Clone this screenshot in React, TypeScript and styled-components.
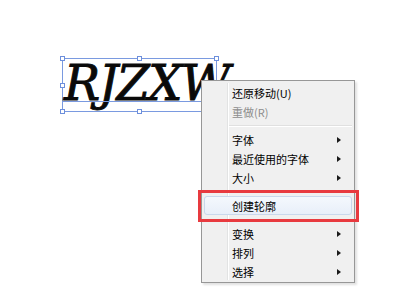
import React from "react";
import styled, { createGlobalStyle } from "styled-components";

const Global = createGlobalStyle`
  html, body { margin: 0; padding: 0; background: #fff; }
  body { width: 400px; height: 299px; overflow: hidden; }
`;

const Canvas = styled.div`
  position: relative;
  width: 400px;
  height: 299px;
  box-sizing: border-box;
  padding: 58px 0 0 62px;
  background: #fff;
  font-family: "Noto Sans CJK SC", "Noto Sans", sans-serif;
`;

const Selection = styled.div`
  position: relative;
  width: 155px;
  height: 54px;
  border: 1px solid #7a9ae0;
  box-sizing: border-box;
  padding-left: 1px;
`;

const Baseline = styled.div`
  position: absolute;
  left: 0;
  right: 0;
  top: 42px;
  height: 1px;
  background: #7a9ae0;
`;

const Word = styled.div`
  margin-top: 0;
  font-family: "DejaVu Serif", "Liberation Serif", serif;
  font-style: italic;
  font-size: 48px;
  line-height: 48px;
  color: #0a0a0a;
  white-space: nowrap;
  letter-spacing: -1.5px;
  -webkit-text-stroke: 0.9px #0a0a0a;
`;

const HandleGrid = styled.div`
  position: absolute;
  inset: -3px;
  display: grid;
  grid-template-columns: repeat(3, 5px);
  grid-template-rows: repeat(3, 5px);
  justify-content: space-between;
  align-content: space-between;
`;

const Handle = styled.div<{ $empty?: boolean }>`
  width: 5px;
  height: 5px;
  box-sizing: border-box;
  background: ${(p) => (p.$empty ? "transparent" : "#fff")};
  border: 1px solid ${(p) => (p.$empty ? "transparent" : "#6d8fdc")};
`;

const Menu = styled.div`
  position: absolute;
  left: 201px;
  top: 80px;
  width: 154px;
  height: 203px;
  box-sizing: border-box;
  border: 1px solid #979797;
  background: #f0f0f0;
  padding: 2px 0 1px;
  box-shadow: 2px 2px 2px rgba(0, 0, 0, 0.12);
  display: flex;
  flex-direction: column;
  &::before {
    content: "";
    position: absolute;
    left: 25px;
    top: 2px;
    bottom: 2px;
    width: 1px;
    background: #e2e3e3;
    box-shadow: 1px 0 0 #fff;
  }
`;

const Row = styled.div<{ $disabled?: boolean; $hover?: boolean }>`
  position: relative;
  height: 19px;
  margin: 0 2px;
  padding: 0 10px 0 27px;
  display: flex;
  align-items: center;
  justify-content: space-between;
  font-size: 11px;
  color: ${(p) => (p.$disabled ? "#8d8d8d" : "#000")};
  box-sizing: border-box;
  border: 1px solid ${(p) => (p.$hover ? "#c9d8ec" : "transparent")};
  border-radius: 3px;
  background: ${(p) =>
    p.$hover ? "linear-gradient(#f4f8fd, #e8eff9)" : "transparent"};
  z-index: 1;
`;

const Arrow = styled.span`
  width: 0;
  height: 0;
  border-top: 3.5px solid transparent;
  border-bottom: 3.5px solid transparent;
  border-left: 4px solid #1a1a1a;
`;

const Separator = styled.div`
  height: 9px;
  display: flex;
  align-items: center;
  padding-left: 27px;
  margin-right: 2px;
  &::after {
    content: "";
    flex: 1;
    height: 1px;
    background: #e0e0e0;
    box-shadow: 0 1px 0 #fff;
  }
`;

const Callout = styled.div`
  position: absolute;
  left: 198px;
  top: 190px;
  width: 161px;
  height: 32px;
  box-sizing: border-box;
  border: 3px solid #e83a3f;
`;

type Item =
  | { label: string; sub?: boolean; disabled?: boolean; hover?: boolean }
  | "sep";

const items: Item[] = [
  { label: "还原移动(U)" },
  { label: "重做(R)", disabled: true },
  "sep",
  { label: "字体", sub: true },
  { label: "最近使用的字体", sub: true },
  { label: "大小", sub: true },
  "sep",
  { label: "创建轮廓", hover: true },
  "sep",
  { label: "变换", sub: true },
  { label: "排列", sub: true },
  { label: "选择", sub: true },
];

export default function App() {
  return (
    <Canvas>
      <Global />
      <Selection>
        <Word>RJZXW</Word>
        <Baseline />
        <HandleGrid>
          {Array.from({ length: 9 }, (_, i) => (
            <Handle key={i} $empty={i === 4} />
          ))}
        </HandleGrid>
      </Selection>
      <Menu>
        {items.map((it, i) =>
          it === "sep" ? (
            <Separator key={i} />
          ) : (
            <Row key={i} $disabled={it.disabled} $hover={it.hover}>
              <span>{it.label}</span>
              {it.sub && <Arrow />}
            </Row>
          )
        )}
      </Menu>
      <Callout />
    </Canvas>
  );
}
